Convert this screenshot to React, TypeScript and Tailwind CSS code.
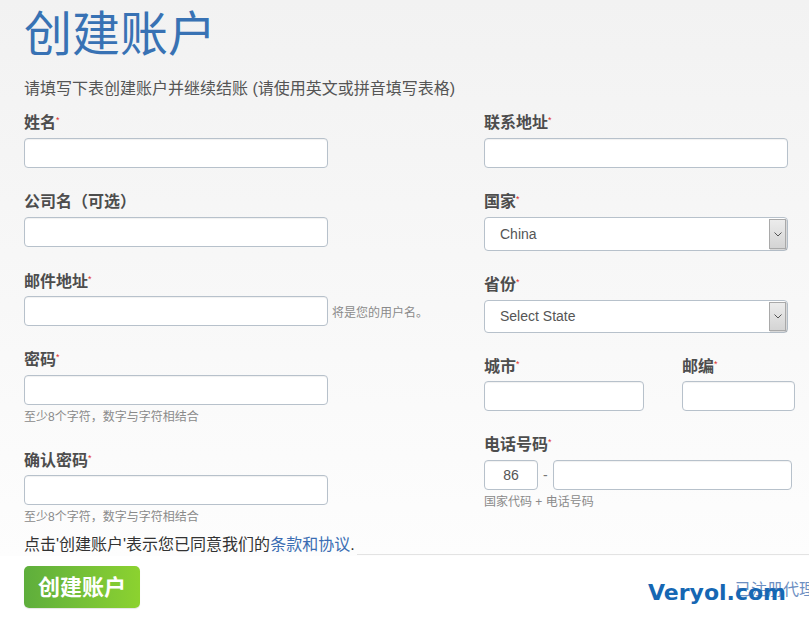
import React from "react";

const inputCls =
  "block h-[30px] rounded-[4px] border border-[#b7c1cb] bg-white shadow-[inset_0_1px_1px_rgba(0,0,0,0.06)]";

function Label({ text, req = true, cls = "" }: { text: string; req?: boolean; cls?: string }) {
  return (
    <div className={"h-[20px] leading-[24px] text-[16px] font-bold text-[#4d4d4d] whitespace-nowrap " + cls}>
      {text}
      {req && <span className="relative -top-[5px] text-[9px] font-normal text-[#e0302b]">*</span>}
    </div>
  );
}

function Hint({ text, cls = "" }: { text: string; cls?: string }) {
  return <div className={"h-[16px] leading-[16px] text-[12px] text-[#8a8a8a] whitespace-nowrap " + cls}>{text}</div>;
}

function Select({ value, h, cls = "" }: { value: string; h: string; cls?: string }) {
  return (
    <div className={"flex w-[304px] items-center rounded-[4px] border border-[#b7c1cb] bg-white " + h + " " + cls}>
      <div className="flex-1 pl-[15px] text-[14px] text-[#555]">{value}</div>
      <div className="mr-[1px] flex h-[calc(100%-2px)] w-[17px] items-center justify-center border border-[#a9a9a9] bg-gradient-to-b from-[#ececec] to-[#d4d4d4] shadow-[1px_1px_1px_rgba(0,0,0,0.15)]">
        <svg width="8" height="5" viewBox="0 0 8 5">
          <path d="M0.5 0.5 L4 4 L7.5 0.5" fill="none" stroke="#555" strokeWidth="1" />
        </svg>
      </div>
    </div>
  );
}

export default function App() {
  return (
    <div className="relative min-h-[623px] w-full overflow-hidden bg-white font-['Liberation_Sans','Noto_Sans_CJK_SC',sans-serif]">
      <div className="bg-gradient-to-b from-[#f2f2f2] to-[#fdfdfd] px-[24px] pt-[7px]">
        <h1 className="h-[56px] text-[48px] font-normal leading-[56px] text-[#3872b4] whitespace-nowrap">创建账户</h1>
        <p className="mt-[15px] h-[22px] text-[16px] leading-[22px] text-[#555] whitespace-nowrap">
          请填写下表创建账户并继续结账 (请使用英文或拼音填写表格)
        </p>

        <div className="mt-[11px] flex">
          {/* left column */}
          <div className="w-[460px] shrink-0">
            <Label text="姓名" />
            <div className={inputCls + " mt-[7px] w-[304px]"} />

            <Label text="公司名（可选）" req={false} cls="mt-[22px]" />
            <div className={inputCls + " mt-[7px] w-[304px]"} />

            <Label text="邮件地址" cls="mt-[23px]" />
            <div className="mt-[6px] flex items-center">
              <div className={inputCls + " w-[304px] shrink-0"} />
              <span className="ml-[4px] mt-[4px] text-[12px] text-[#8a8a8a] whitespace-nowrap">将是您的用户名。</span>
            </div>

            <Label text="密码" cls="mt-[22px]" />
            <div className={inputCls + " mt-[7px] w-[304px]"} />
            <Hint text="至少8个字符，数字与字符相结合" cls="mt-[4px]" />

            <Label text="确认密码" cls="mt-[24px]" />
            <div className={inputCls + " mt-[6px] w-[304px]"} />
            <Hint text="至少8个字符，数字与字符相结合" cls="mt-[4px]" />
          </div>

          {/* right column */}
          <div className="w-[325px] shrink-0">
            <Label text="联系地址" />
            <div className={inputCls + " mt-[7px] w-[304px]"} />

            <Label text="国家" cls="mt-[22px]" />
            <Select value="China" h="h-[34px]" cls="mt-[7px]" />

            <Label text="省份" cls="mt-[22px]" />
            <Select value="Select State" h="h-[33px]" cls="mt-[7px]" />

            <div className="mt-[22px] flex">
              <div className="w-[198px] shrink-0">
                <Label text="城市" />
                <div className={inputCls + " mt-[6px] w-[160px]"} />
              </div>
              <div>
                <Label text="邮编" />
                <div className={inputCls + " mt-[6px] w-[113px]"} />
              </div>
            </div>

            <Label text="电话号码" cls="mt-[22px]" />
            <div className="mt-[7px] flex items-center">
              <div className={inputCls + " w-[54px] shrink-0 flex items-center justify-center text-[14px] text-[#555]"}>86</div>
              <span className="mx-[5px] text-[14px] text-[#777]">-</span>
              <div className={inputCls + " w-[239px] shrink-0"} />
            </div>
            <Hint text="国家代码 + 电话号码" cls="mt-[4px]" />
          </div>
        </div>

        <div className="mt-[9px] flex items-end">
          <p className="h-[22px] text-[16px] leading-[22px] text-[#333] whitespace-nowrap">
            点击'创建账户'表示您已同意我们的<span className="text-[#3a6db3]">条款和协议</span>.
          </p>
          <div className="mb-[1px] ml-[2px] mr-[-24px] flex-1 border-b border-[#e3e3e3]" />
        </div>
      </div>

      <div className="flex items-start px-[24px] pt-[10px]">
        <button className="h-[42px] w-[116px] shrink-0 rounded-[5px] bg-gradient-to-r from-[#5eae3c] to-[#8cd22f] text-[22px] font-bold text-white shadow-[0_1px_1px_rgba(0,0,0,0.1)]">
          创建账户
        </button>
        <span className="ml-[595px] mt-[13px] shrink-0 text-[16px] leading-[22px] text-[#6d8fc2] whitespace-nowrap">
          已注册代理商？请登录
        </span>
      </div>

      <div className="pointer-events-none absolute left-[648px] top-[578px] font-['DejaVu_Sans',sans-serif] text-[22px] font-bold leading-[30px] text-[#1667b3] whitespace-nowrap">
        Veryol.com
      </div>
    </div>
  );
}
